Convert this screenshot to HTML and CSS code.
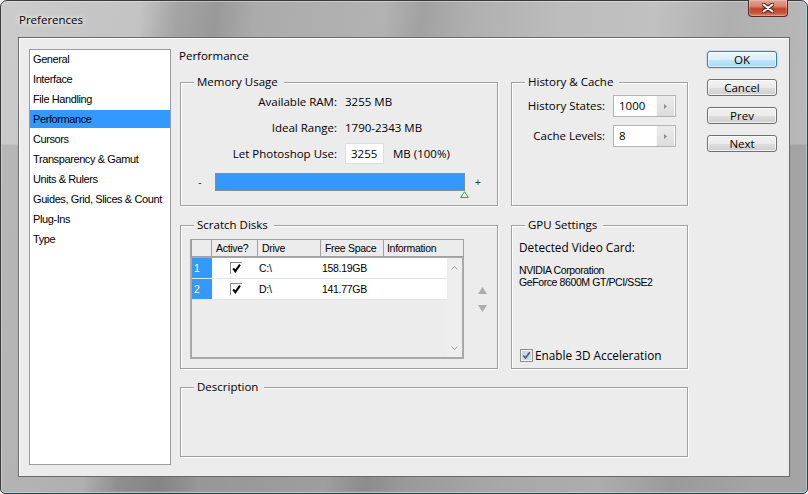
FILE: index.html
```html
<!DOCTYPE html>
<html>
<head>
<meta charset="utf-8">
<link rel="stylesheet" href="styles.css">
</head>
<body>
<div class="window">
  <div class="titlebar">
    <span class="title">Preferences</span>
    <button class="close" aria-label="Close"><svg width="12" height="10" viewBox="0 0 12 10"><path d="M1.5 1.5 L10.5 8.5 M10.5 1.5 L1.5 8.5" stroke="#3b1d17" stroke-width="4" stroke-linecap="round"/><path d="M1.5 1.5 L10.5 8.5 M10.5 1.5 L1.5 8.5" stroke="#fff" stroke-width="2" stroke-linecap="round"/></svg></button>
  </div>
  <div class="panel">
    <ul class="nav">
      <li>General</li>
      <li>Interface</li>
      <li>File Handling</li>
      <li class="active">Performance</li>
      <li>Cursors</li>
      <li>Transparency &amp; Gamut</li>
      <li>Units &amp; Rulers</li>
      <li>Guides, Grid, Slices &amp; Count</li>
      <li>Plug-Ins</li>
      <li>Type</li>
    </ul>
    <div class="main">
      <h1 class="heading">Performance</h1>
      <div class="groups">
        <fieldset class="group">
          <legend>Memory Usage</legend>
          <div class="mem-grid">
            <span class="lbl">Available RAM:</span><span>3255 MB</span>
            <span class="lbl">Ideal Range:</span><span>1790-2343 MB</span>
            <span class="lbl">Let Photoshop Use:</span>
            <span class="use"><span class="field">3255</span><span>MB (100%)</span></span>
          </div>
          <div class="slider">
            <span class="pm">-</span>
            <div class="bar"><svg class="thumb" width="9" height="7" viewBox="0 0 9 7"><path d="M4.5 0.7 L8.3 6.5 H0.7 Z" fill="#fff" stroke="#3a9a48"/></svg></div>
            <span class="pm">+</span>
          </div>
        </fieldset>
        <fieldset class="group">
          <legend>History &amp; Cache</legend>
          <div class="hist-grid">
            <span class="lbl">History States:</span>
            <span class="spin"><span>1000</span><span class="spin-btn"><svg width="3" height="5" viewBox="0 0 3 5"><path d="M0 0 L3 2.5 L0 5Z" fill="#8c8c8c"/></svg></span></span>
            <span class="lbl">Cache Levels:</span>
            <span class="spin"><span>8</span><span class="spin-btn"><svg width="3" height="5" viewBox="0 0 3 5"><path d="M0 0 L3 2.5 L0 5Z" fill="#8c8c8c"/></svg></span></span>
          </div>
        </fieldset>
        <fieldset class="group">
          <legend>Scratch Disks</legend>
          <div class="scratch-body">
            <div class="table">
              <div class="thead"><span></span><span>Active?</span><span>Drive</span><span>Free Space</span><span>Information</span></div>
              <div class="tbody">
                <div class="rows">
                  <div class="row"><span class="num">1</span><span class="chk"><svg width="12" height="12" viewBox="0 0 12 12"><path d="M0.5 12 V0.5 H12" stroke="#8a8a8a" fill="none"/><path d="M3.2 6.3 L5.3 9.2 L10 2.6" stroke="#000" stroke-width="2" fill="none"/></svg></span><span class="cell">C:\</span><span class="cell">158.19GB</span><span></span></div>
                  <div class="row"><span class="num">2</span><span class="chk"><svg width="12" height="12" viewBox="0 0 12 12"><path d="M0.5 12 V0.5 H12" stroke="#8a8a8a" fill="none"/><path d="M3.2 6.3 L5.3 9.2 L10 2.6" stroke="#000" stroke-width="2" fill="none"/></svg></span><span class="cell">D:\</span><span class="cell">141.77GB</span><span></span></div>
                </div>
                <div class="vscroll">
                  <svg width="7" height="4" viewBox="0 0 7 4"><path d="M0.5 3.5 L3.5 0.5 L6.5 3.5" stroke="#a5a5a5" fill="none"/></svg>
                  <svg width="7" height="4" viewBox="0 0 7 4"><path d="M0.5 0.5 L3.5 3.5 L6.5 0.5" stroke="#a5a5a5" fill="none"/></svg>
                </div>
              </div>
            </div>
            <div class="movers">
              <svg width="9" height="7" viewBox="0 0 9 7"><path d="M4.5 0 L9 7 H0 Z" fill="#acacac"/></svg>
              <svg width="9" height="7" viewBox="0 0 9 7"><path d="M0 0 H9 L4.5 7 Z" fill="#acacac"/></svg>
            </div>
          </div>
        </fieldset>
        <fieldset class="group">
          <legend>GPU Settings</legend>
          <div class="gpu-label">Detected Video Card:</div>
          <div class="gpu-info">NVIDIA Corporation<br>GeForce 8600M GT/PCI/SSE2</div>
          <label class="gpu-check"><svg width="13" height="13" viewBox="0 0 13 13"><rect x="0.5" y="0.5" width="12" height="12" fill="#f4f4f4" stroke="#8e8f8f"/><rect x="2" y="2" width="9" height="9" fill="#d3d8de"/><path d="M3.2 6.5 L5.5 9 L9.8 3.2" stroke="#4b5d80" stroke-width="1.7" fill="none"/></svg><span>Enable 3D Acceleration</span></label>
        </fieldset>
      </div>
      <fieldset class="group desc">
        <legend>Description</legend>
      </fieldset>
    </div>
    <div class="buttons">
      <button class="btn default">OK</button>
      <button class="btn">Cancel</button>
      <button class="btn">Prev</button>
      <button class="btn">Next</button>
    </div>
  </div>
</div>
</body>
</html>
```
FILE: styles.css
```css
* { box-sizing: border-box; }
html, body { margin: 0; padding: 0; }
body {
  background: #f2f2f2;
  font-family: "Open Sans", "Liberation Sans", sans-serif;
  color: #000;
}
.window {
  width: 808px;
  height: 494px;
  border: 1px solid #3a3a3a;
  border-radius: 7px 7px 5px 5px;
  background:
    linear-gradient(180deg, rgba(255,255,255,0.10) 0px, rgba(255,255,255,0.10) 143px, rgba(0,0,0,0.07) 144px, rgba(0,0,0,0.07) 100%),
    linear-gradient(97deg, #c6c6c6 0px, #bcbcbc 140px, #9a9a9a 175px, #8e8e8e 215px, #a2a2a2 255px, #aaaaaa 380px, #979797 420px, #a6a6a6 465px, #b5b5b5 560px, #bababa 650px, #a6a6a6 725px, #b0b0b0 808px);
  box-shadow: inset 0 0 0 1px rgba(255,255,255,0.35), inset 0 -1px 0 1px rgba(80,200,235,0.35);
  padding: 0 17px;
  display: flex;
  flex-direction: column;
}
.titlebar {
  height: 36px;
  display: flex;
  justify-content: space-between;
  align-items: flex-start;
}
.title {
  margin-top: 12px;
  margin-left: 1px;
  font-size: 11.5px;
  line-height: 14px;
  text-shadow: 0 0 5px #fff, 0 0 9px rgba(255,255,255,0.9);
}
.close {
  width: 40px;
  height: 17px;
  margin: -1px 2px 0 0;
  padding: 0;
  border: 1px solid #5a2a22;
  border-top: none;
  border-radius: 0 0 4px 4px;
  background: linear-gradient(#e6a193 0%, #d6806b 42%, #c0452b 52%, #c25337 78%, #d9835f 100%);
  box-shadow: inset 0 0 0 1px rgba(255,255,255,0.25);
  display: flex;
  align-items: center;
  justify-content: center;
}
.panel {
  height: 440px;
  background: #ececec;
  border: 1px solid #6a6a6a;
  box-shadow: inset 1px 1px 0 #fdfdfd;
  display: flex;
  padding: 11px 12px 11px 10px;
}
.nav {
  list-style: none;
  margin: 0;
  padding: 0;
  width: 142px;
  height: 416px;
  background: #fff;
  border: 1px solid #9c9c9c;
  font-family: "Liberation Sans", Arial, sans-serif;
  font-size: 11px;
  letter-spacing: -0.4px;
}
.nav li {
  height: 18px;
  line-height: 18px;
  margin-bottom: 2px;
  padding-left: 3px;
}
.nav li.active { background: #3399ff; }
.main {
  width: 508px;
  margin-left: 9px;
  display: flex;
  flex-direction: column;
}
.heading {
  margin: 0 0 0 -1px;
  font-size: 11.5px;
  font-weight: 400;
  line-height: 14px;
}
.groups {
  margin-top: 12px;
  display: grid;
  grid-template-columns: 318px 177px;
  grid-template-rows: 131px 151px;
  column-gap: 13px;
  row-gap: 12px;
}
.group {
  margin: 0;
  padding: 0;
  min-width: 0;
  border: 1px solid #a0a0a0;
  box-shadow: inset 1px 1px 0 #fff, 1px 1px 0 #fff;
}
.group legend {
  margin-left: 13px;
  padding: 0 6px 0 3px;
  font-size: 11.5px;
  line-height: 14px;
  background: #ececec;
}
.desc {
  margin-top: 11px;
  height: 77px;
}
.lbl { text-align: right; }
.mem-grid {
  margin-top: 2px;
  display: grid;
  grid-template-columns: 156px auto;
  grid-template-rows: 22px 22px 21px;
  column-gap: 8px;
  row-gap: 4px;
  align-items: center;
  font-size: 11.5px;
  line-height: 14px;
}
.use {
  display: flex;
  align-items: center;
  gap: 9px;
}
.field {
  width: 39px;
  height: 21px;
  background: #fff;
  border: 1px solid #dedede;
  padding-left: 5px;
  line-height: 19px;
}
.slider {
  margin-top: 9px;
  padding-left: 14px;
  height: 18px;
  display: flex;
  align-items: center;
}
.pm {
  width: 10px;
  text-align: center;
  font-family: "Liberation Sans", Arial, sans-serif;
  font-size: 10px;
  color: #333;
}
.bar {
  position: relative;
  width: 250px;
  height: 18px;
  margin: 0 8px 0 10px;
  background: #3399ff;
  border: 1px solid #8b8b8b;
}
.thumb {
  position: absolute;
  left: 244px;
  top: 17px;
}
.hist-grid {
  margin-top: 6px;
  display: grid;
  grid-template-columns: 93px 63px;
  grid-template-rows: 22px 22px;
  column-gap: 8px;
  row-gap: 8px;
  align-items: center;
  font-size: 11.5px;
  line-height: 14px;
}
.spin {
  height: 22px;
  display: flex;
  align-items: center;
  justify-content: space-between;
  background: #fff;
  border: 1px solid #b3b3b3;
  padding: 0 1px 0 5px;
}
.spin-btn {
  width: 18px;
  height: 20px;
  background: linear-gradient(#ececec, #dcdcdc);
  border-left: 1px solid #f8f8f8;
  display: flex;
  align-items: center;
  justify-content: center;
}
.scratch-body {
  margin: 7px 0 0 9px;
  display: flex;
  gap: 14px;
}
.table {
  width: 274px;
  font-family: "Liberation Sans", Arial, sans-serif;
  font-size: 10.5px;
  letter-spacing: -0.3px;
}
.thead {
  display: grid;
  grid-template-columns: 20px 46px 63px 63px 1fr;
  height: 18px;
  border: 1px solid #a0a0a0;
  border-left-width: 2px;
  line-height: 16px;
}
.thead span {
  border-right: 1px solid #a0a0a0;
  padding-left: 4px;
}
.thead span:last-child { border-right: none; padding-left: 3px; }
.tbody {
  height: 102px;
  display: flex;
  border: 2px solid #a8a8a8;
  border-top-width: 1px;
  background: #ececec;
}
.rows { flex: 1; }
.row {
  display: grid;
  grid-template-columns: 20px 46px 63px 63px 1fr;
  height: 21px;
  background: #fff;
  border-bottom: 1px solid #e4e4e4;
  line-height: 20px;
}
.num {
  background: #3399ff;
  color: #fff;
  padding-left: 2px;
}
.chk {
  display: flex;
  align-items: center;
  justify-content: center;
  padding-left: 1px;
}
.cell { padding-left: 1px; }
.vscroll {
  width: 15px;
  background: #eeeeee;
  display: flex;
  flex-direction: column;
  justify-content: space-between;
  align-items: center;
  padding: 8px 0 7px;
}
.movers {
  padding-top: 48px;
  display: flex;
  flex-direction: column;
  gap: 11px;
}
.gpu-label {
  margin: 8px 0 0 7px;
  font-size: 11.8px;
  line-height: 15px;
}
.gpu-info {
  margin: 9px 0 0 7px;
  font-family: "Liberation Sans", Arial, sans-serif;
  font-size: 10.5px;
  letter-spacing: -0.4px;
  line-height: 12px;
}
.gpu-check {
  margin: 60px 0 0 8px;
  height: 14px;
  display: flex;
  align-items: center;
  gap: 2px;
  font-size: 11.8px;
  line-height: 14px;
}
.buttons {
  width: 70px;
  margin-left: 19px;
  padding-top: 2px;
  display: flex;
  flex-direction: column;
  gap: 11px;
}
.btn {
  height: 17px;
  padding: 0;
  font-family: "Open Sans", "Liberation Sans", sans-serif;
  font-size: 11.5px;
  line-height: 15px;
  color: #000;
  border: 1px solid #707070;
  border-radius: 3px;
  background: linear-gradient(#f2f2f2 0%, #ebebeb 50%, #dddddd 51%, #cfcfcf 100%);
  box-shadow: inset 0 0 0 1px rgba(255,255,255,0.7);
}
.btn.default {
  border-color: #3c7fb1;
  background: linear-gradient(#eaf6fd 0%, #d9f0fc 50%, #bee6fd 51%, #a7d9f5 100%);
  box-shadow: inset 0 0 0 1px rgba(255,255,255,0.6), 0 0 2px rgba(60,160,220,0.6);
}
```
